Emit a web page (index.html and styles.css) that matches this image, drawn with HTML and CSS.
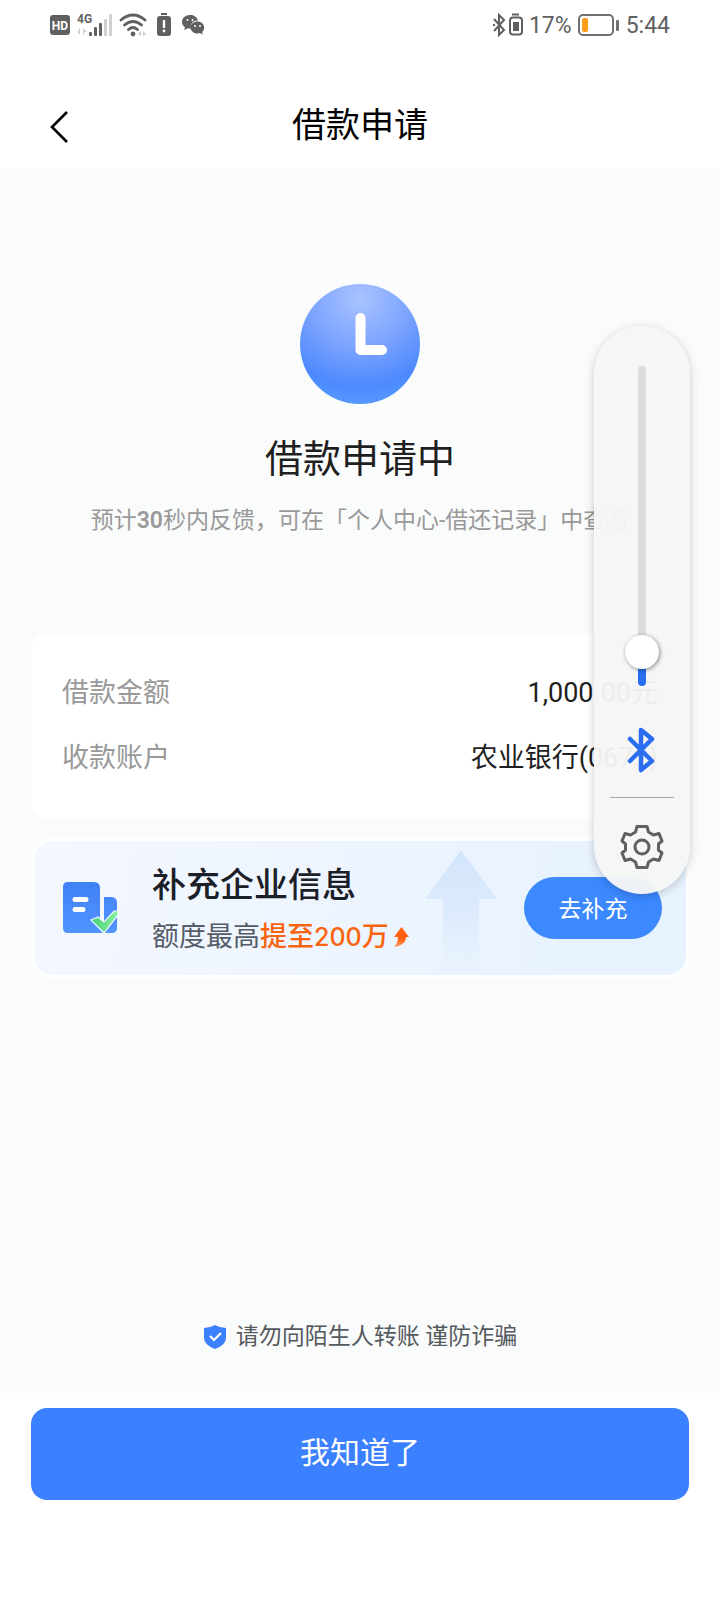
FILE: index.html
```html
<!DOCTYPE html>
<html lang="zh-CN">
<head>
<meta charset="utf-8">
<meta name="viewport" content="width=device-width, initial-scale=1">
<title>借款申请</title>
<link rel="stylesheet" href="styles.css">
</head>
<body>
<div class="status">
  <div class="status-group">
    <svg width="22" height="22" viewBox="0 0 22 22"><rect x="1" y="1" width="20" height="20" rx="3" fill="#606060"/><text x="11" y="16" text-anchor="middle" class="hd-text">HD</text></svg>
    <svg width="36" height="24" viewBox="0 0 36 24"><text x="0" y="10" class="net-text">4G</text><g fill="#606060"><rect x="12" y="19" width="3" height="4" rx="1"/><rect x="17" y="14" width="3" height="9" rx="1"/><rect x="22" y="10" width="3" height="13" rx="1"/></g><g fill="#d0d0d0"><rect x="27" y="6" width="3" height="17" rx="1"/><rect x="32" y="1" width="3" height="22" rx="1"/><path d="M3 15v7L0 18h2v-3zM6 15v7h1v-3h3z"/></g></svg>
    <svg width="28" height="24" viewBox="0 0 28 24"><g fill="none" stroke="#606060" stroke-width="2.800" stroke-linecap="round"><path d="M2 7q12-10 24 0M5.500 12q8.500-7 17 0M9.500 16.500q4.500-4 9 0"/></g><circle cx="14" cy="21" r="2.400" fill="#606060"/><path d="M22 18v5l-3-2zM24 18v5l3-2z" fill="#c8c8c8"/></svg>
    <svg class="st-alert" width="14" height="24" viewBox="0 0 14 24"><path d="M4 1h6" stroke="#606060" stroke-width="2"/><rect x="0" y="3" width="14" height="20" rx="3" fill="#606060"/><path d="M7 7v8" stroke="#fff" stroke-width="2.400"/><circle cx="7" cy="18" r="1.400" fill="#fff"/></svg>
    <svg class="st-chat" width="24" height="22" viewBox="0 0 24 22"><path d="M9 1C4.500 1 1 4 1 8c0 2 1 4 3 5.300L3 16l4-1.800c1 .3 2 .3 3 .3C9 9 13 6 17 6.500 16 3 13 1 9 1z" fill="#606060"/><path d="M16.500 7.500c-4 0-7 2.700-7 6s3 6 7 6c1 0 1.600-.1 2.400-.4l3 1.400-.7-2.500c1.300-1.100 2-2.700 2-4.500 0-3.300-2.900-6-6.700-6z" fill="#606060"/><g fill="#fff"><circle cx="6.500" cy="6" r="1"/><circle cx="11.500" cy="6" r="1"/><circle cx="14" cy="12" r="1"/><circle cx="19" cy="12" r="1"/></g></svg>
  </div>
  <div class="status-group">
    <svg width="32" height="24" viewBox="0 0 32 24"><g fill="none" stroke="#606060" stroke-width="2"><path d="M3 6l10 11-5 5V2l5 5L3 18"/><path d="M21 1.500h7"/><rect x="19" y="4.500" width="12" height="17" rx="3"/></g><circle cx="3" cy="12" r="1.200" fill="#606060"/><rect x="22" y="9" width="6" height="9" fill="#606060"/></svg>
    <span>17%</span>
    <svg width="42" height="22" viewBox="0 0 42 22"><rect x="1" y="1" width="34" height="20" rx="4" fill="none" stroke="#707070" stroke-width="2"/><rect x="4" y="4" width="6" height="14" rx="2" fill="#ff9c1c"/><rect x="38" y="6" width="3" height="11" rx="1" fill="#707070"/></svg>
    <span>5:44</span>
  </div>
</div>
<header class="header">
  <button class="back" type="button" aria-label="返回"><svg width="20" height="34" viewBox="0 0 20 34"><path d="M18 2L3 17l15 15" fill="none" stroke="#000" stroke-width="2.600"/></svg></button>
  <h1 class="header-title">借款申请</h1>
</header>
<main class="main">
  <section class="result">
    <svg width="120" height="120" viewBox="0 0 120 120">
      <defs><radialGradient id="dial" cx=".5" cy=".12" r=".95"><stop offset="0" stop-color="#a9c4ff"/><stop offset=".45" stop-color="#7aa2ff"/><stop offset=".78" stop-color="#4d89fe"/><stop offset="1" stop-color="#57a0ff"/></radialGradient></defs>
      <circle cx="60" cy="60" r="60" fill="url(#dial)"/>
      <path d="M60.500 34v32H82" fill="none" stroke="#fff" stroke-width="10" stroke-linecap="round" stroke-linejoin="round"/>
    </svg>
    <h2 class="result-title">借款申请中</h2>
    <p class="result-note">预计<b>30</b>秒内反馈，可在「个人中心-借还记录」中查看</p>
  </section>
  <dl class="card">
    <div class="row"><dt>借款金额</dt><dd>1,000.00元</dd></div>
    <div class="row"><dt>收款账户</dt><dd>农业银行(0672)</dd></div>
  </dl>
  <section class="promo">
    <svg class="promo-arrow" width="74" height="122" viewBox="0 0 74 122"><defs><linearGradient id="lift" x2="0" y2="1"><stop stop-color="#d3e6fc"/><stop offset=".5" stop-color="#dceafc"/><stop offset="1" stop-color="#e4effe" stop-opacity=".2"/></linearGradient></defs><path d="M37 0L73 49H55V122H19V49H1z" fill="url(#lift)"/></svg>
    <svg width="56" height="54" viewBox="0 0 56 54">
      <defs><linearGradient id="doc" x2="0" y2="1"><stop stop-color="#3f80f5"/><stop offset="1" stop-color="#5295ff"/></linearGradient><linearGradient id="tick"><stop stop-color="#44cf73"/><stop offset="1" stop-color="#8ff0a6"/></linearGradient></defs>
      <path d="M6 1h26q6 0 6 6v45H6q-5 0-5-5V6q0-5 5-5zM42 16h7q6 0 6 6v25q0 5-5 5H38V40h4z" fill="url(#doc)"/>
      <path d="M13 18.500h11M13 28.500h8" stroke="#fff" stroke-width="5" stroke-linecap="round"/>
      <path d="M29 39l7-3 6 5L52 30h4v4L42 52z" fill="url(#tick)" stroke="#f2f8ff" stroke-width="1.200"/>
    </svg>
    <div class="promo-text">
      <h3 class="promo-title">补充企业信息</h3>
      <p class="promo-sub">额度最高<strong>提至<span class="amount">200</span>万</strong><svg width="16" height="22" viewBox="0 0 16 22"><defs><linearGradient id="rise" x2="0" y2="1"><stop offset=".6" stop-color="#ff5f0f"/><stop offset="1" stop-color="#ffa070"/></linearGradient></defs><path d="M8.500 1l7.500 10h-3q0 8-12 10 4-4 4-10H1z" fill="url(#rise)"/></svg></p>
    </div>
    <button class="promo-btn" type="button">去补充</button>
  </section>
  <p class="safety"><svg width="24" height="26" viewBox="0 0 24 26"><path d="M12 1q5 3 11 3v10q0 7-11 11Q1 21 1 14V4q6 0 11-3z" fill="#3b80fc"/><path d="M7 12l4 4 7-7" fill="none" stroke="#fff" stroke-width="2.200"/></svg>请勿向陌生人转账 谨防诈骗</p>
</main>
<footer class="footer"><button class="confirm" type="button">我知道了</button></footer>
<aside class="volume">
  <input class="slider" type="range" min="0" max="100" value="6" aria-label="蓝牙音量">
  <svg class="bt" width="30" height="48" viewBox="0 0 30 48"><path d="M3 13l22 22-11 9V4l11 9L3 35" fill="none" stroke="#2a6df0" stroke-width="4.500" stroke-linecap="round" stroke-linejoin="round"/></svg>
  <hr class="volume-line">
  <button class="gear" type="button" aria-label="设置"><svg width="44" height="46" viewBox="0 0 44 46"><g fill="none" stroke="#606060" stroke-width="3" stroke-linejoin="round"><path d="M17 2.500h10l1.500 5.500 5 3 5.500-1.500L42 17l-3.500 3v6l3.500 3-3 7.500-5.500-1.500-5 3-1.500 5.500H17L15.500 38l-5-3L5 36.500 2 29l3.500-3v-6L2 17l3-7.500 5.500 1.500 5-3z"/><circle cx="22" cy="23" r="7"/></g></svg></button>
</aside>
</body>
</html>
```
FILE: styles.css
```css
* { box-sizing: border-box; }
body {
  position: relative;
  display: flex;
  flex-direction: column;
  min-height: 100vh;
  margin: 0;
  background: #fff;
  color: #1f1f1f;
  font-family: Roboto, "Noto Sans CJK SC", sans-serif;
}
h1, h2, h3, p, dl, dd { margin: 0; font-weight: 400; }
button { border: 0; padding: 0; font-family: inherit; cursor: pointer; }
svg { display: block; flex: none; }

.status {
  display: flex;
  justify-content: space-between;
  align-items: center;
  height: 48px;
  padding: 2px 50px 0 49px;
  color: #606060;
  font-size: 23px;
}
.status-group { display: flex; align-items: center; gap: 6px; }
.st-alert { margin-left: 4px; }
.st-chat { margin-left: 4px; }
.hd-text { font: 700 12px Roboto, sans-serif; fill: #fff; }
.net-text { font: 700 12px Roboto, sans-serif; fill: #606060; }

.header {
  display: grid;
  grid-template-columns: 1fr auto 1fr;
  align-items: center;
  height: 121px;
  padding: 32px 49px 0;
}
.back { justify-self: start; padding: 4px 0 0; background: none; }
.header-title { color: #000; font-size: 34px; line-height: 48px; }

.main {
  flex: 1;
  display: flex;
  flex-direction: column;
  padding: 115px 31px 39px;
  background: #fafbfb;
}
.result { display: flex; flex-direction: column; align-items: center; text-align: center; }
.result-title { margin-top: 27px; font-size: 38px; line-height: 56px; }
.result-note { margin-top: 16px; color: #999; font-size: 23px; line-height: 36px; }
.result-note b { font-weight: 600; }

.card {
  display: flex;
  flex-direction: column;
  gap: 25px;
  margin-top: 95px;
  padding: 39px 31px 40px;
  border-radius: 16px;
  background: #fff;
  font-size: 27px;
  line-height: 40px;
}
.row { display: flex; justify-content: space-between; }
.row dt { color: #999; }

.promo {
  position: relative;
  display: flex;
  align-items: center;
  margin-top: 20px;
  padding: 15px 24px 15px 28px;
  border: 3px solid #fff;
  border-radius: 22px;
  background: linear-gradient(100deg, #f4f8ff, #ecf4fe 55%, #e6f2fe);
}
.promo-arrow { position: absolute; top: 9px; right: 188px; }
.promo-text { flex: 1; margin-left: 34px; }
.promo-title { color: #1b2028; font-size: 34px; font-weight: 500; line-height: 58px; }
.promo-sub { display: flex; align-items: center; color: #555c68; font-size: 27px; line-height: 46px; }
.promo-sub strong { margin-right: 4px; color: #fa640f; font-weight: 500; }
.amount { font-family: Inter, sans-serif; font-size: 25px; }
.promo-btn {
  position: relative;
  width: 138px;
  height: 62px;
  padding-bottom: 2px;
  border-radius: 31px;
  background: #3b88ff;
  color: #fff;
  font-size: 23px;
}

.safety {
  display: flex;
  justify-content: center;
  align-items: center;
  gap: 9px;
  margin-top: auto;
  color: #555a60;
  font-size: 23px;
  line-height: 34px;
}
.footer { padding: 15px 31px 100px; }
.confirm {
  display: block;
  width: 100%;
  height: 92px;
  padding-bottom: 8px;
  border-radius: 16px;
  background: #3b80ff;
  color: #fff;
  font-size: 30px;
}

.volume {
  position: absolute;
  top: 326px;
  right: 30px;
  display: flex;
  flex-direction: column;
  align-items: center;
  width: 96px;
  padding: 40px 0 24px;
  border-radius: 48px;
  background: rgba(246, 246, 246, 0.96);
  box-shadow: 0 2px 10px rgba(0, 0, 0, 0.2);
}
.slider {
  appearance: none;
  writing-mode: vertical-lr;
  direction: rtl;
  width: 34px;
  height: 320px;
  margin: 0;
  background: none;
}
.slider::-webkit-slider-runnable-track {
  width: 8px;
  height: 320px;
  border-radius: 4px;
  background: linear-gradient(to top, #2a6df0 34px, #dcdcdc 34px);
}
.slider::-webkit-slider-thumb {
  appearance: none;
  width: 34px;
  height: 34px;
  margin-left: -13px;
  border-radius: 50%;
  background: #fff;
  box-shadow: 1px 1px 4px rgba(0, 0, 0, 0.45);
}
.bt { margin-top: 40px; }
.volume-line { width: 64px; margin: 23px 0 26px; border: 0; border-top: 1px solid #aaa; }
.gear { background: none; }
```
